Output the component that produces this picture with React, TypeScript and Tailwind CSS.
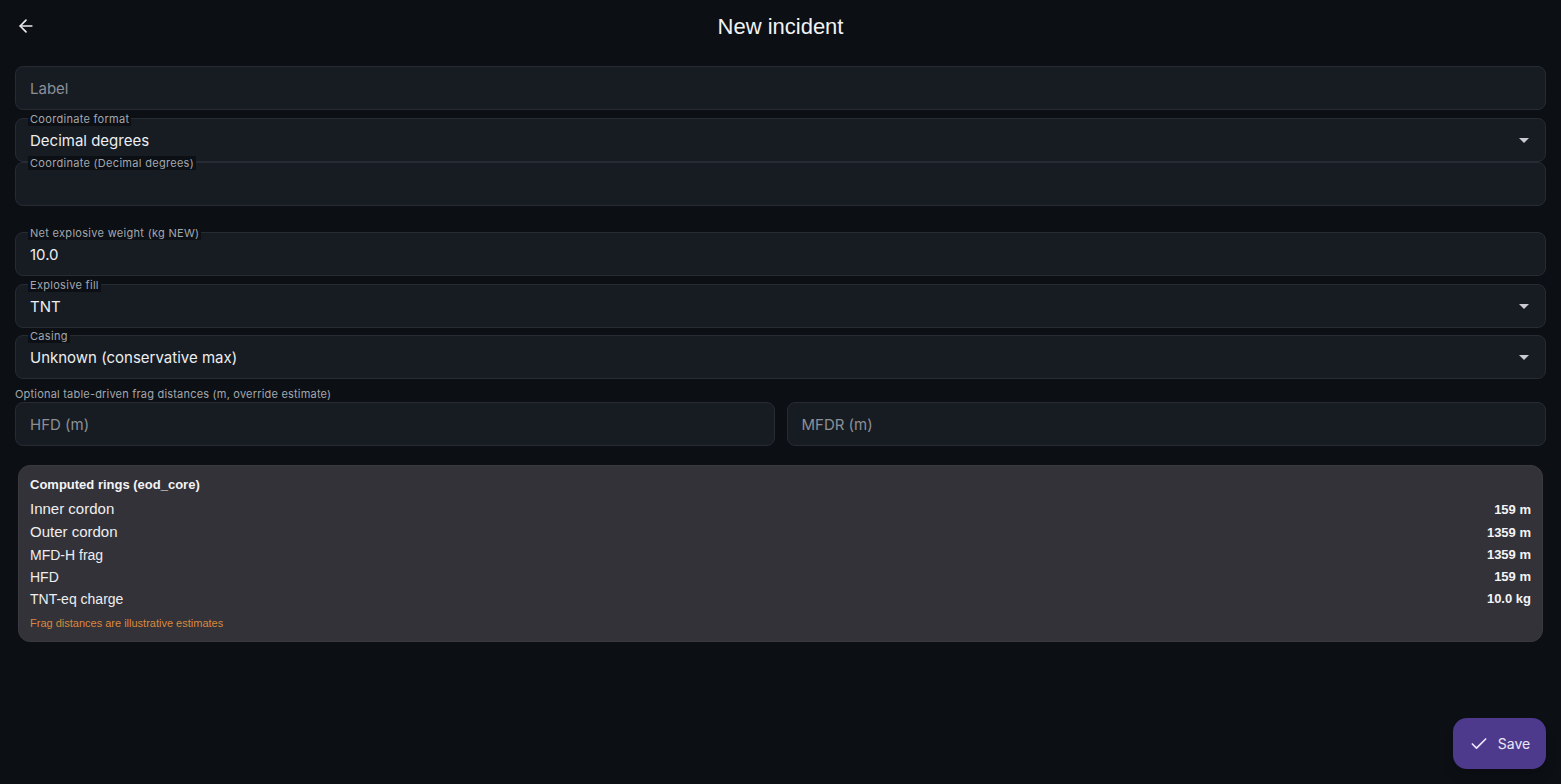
import { ArrowLeft, Check } from "lucide-react";

type Ring = { label: string; value: string; big?: boolean };

const rings: Ring[] = [
  { label: "Inner cordon", value: "159 m", big: true },
  { label: "Outer cordon", value: "1359 m", big: true },
  { label: "MFD-H frag", value: "1359 m" },
  { label: "HFD", value: "159 m" },
  { label: "TNT-eq charge", value: "10.0 kg" },
];

function Caret() {
  return (
    <svg width="10" height="5" viewBox="0 0 10 5" className="shrink-0">
      <path d="M0 0h10L5 5z" fill="#c9cbd0" />
    </svg>
  );
}

function Field({
  label,
  value,
  placeholder,
  select,
  className = "",
}: {
  label?: string;
  value?: string;
  placeholder?: string;
  select?: boolean;
  className?: string;
}) {
  return (
    <div
      className={`relative h-[44px] rounded-lg border border-[#262b34] bg-[#171b22] flex items-center pl-[14px] pr-[16px] ${className}`}
    >
      {label && (
        <span className="absolute left-[12px] top-[-7px] px-[2px] text-[11px] leading-[14px] tracking-[0.3px] text-[#a3a7ae] bg-[#0c0f14]">
          {label}
        </span>
      )}
      <span
        className={`flex-1 text-[15px] pt-[2px] ${
          value ? "text-[#eceef1]" : "text-[#8b9098]"
        }`}
      >
        {value ?? placeholder}
      </span>
      {select && <Caret />}
    </div>
  );
}

export default function App() {
  return (
    <div
      className="min-h-[784px] w-full bg-[#0c0f14] text-white relative"
      style={{ fontFamily: "Inter, 'Noto Sans', sans-serif" }}
    >
      <header className="h-[52px] flex items-center justify-center relative">
        <button className="absolute left-[16px] top-[16px] text-[#e8eaed]">
          <ArrowLeft size={20} strokeWidth={2} />
        </button>
        <h1
          className="text-[22px] text-[#f1f2f4]"
          style={{ fontFamily: "'Liberation Sans', Arial, sans-serif" }}
        >
          New incident
        </h1>
      </header>

      <main className="px-[15px] pt-[14px] flex flex-col">
        <Field placeholder="Label" />
        <Field
          className="mt-[8px]"
          label="Coordinate format"
          value="Decimal degrees"
          select
        />
        <Field label="Coordinate (Decimal degrees)" />

        <Field className="mt-[26px]" label="Net explosive weight (kg NEW)" value="10.0" />
        <Field className="mt-[8px]" label="Explosive fill" value="TNT" select />
        <Field className="mt-[7px]" label="Casing" value="Unknown (conservative max)" select />

        <p className="mt-[8px] text-[11px] leading-[14px] text-[#a3a7ae] tracking-[0.2px]">
          Optional table-driven frag distances (m, override estimate)
        </p>
        <div className="mt-[1px] grid grid-cols-2 gap-[12px]">
          <Field placeholder="HFD (m)" />
          <Field placeholder="MFDR (m)" />
        </div>

        <section
          className="mt-[19px] mx-[3px] rounded-xl bg-[#333238] border border-[#3a3940] px-[11px] pt-[10px] pb-[11px]"
          style={{ fontFamily: "'Liberation Sans', Arial, sans-serif" }}
        >
          <h2 className="text-[13px] font-bold leading-[18px] text-[#f4f4f6]">
            Computed rings (eod_core)
          </h2>
          <div className="mt-[4px] flex flex-col">
            {rings.map((r, i) => (
              <div
                key={r.label}
                className={`flex items-center justify-between ${i < 2 ? "h-[23px]" : "h-[22px]"}`}
              >
                <span
                  className={`text-[#eeeef0] ${r.big ? "text-[15px]" : "text-[14px]"}`}
                >
                  {r.label}
                </span>
                <span className="text-[13px] font-bold text-[#f4f4f6]">{r.value}</span>
              </div>
            ))}
          </div>
          <p className="mt-[6px] text-[11px] leading-[14px] text-[#d9893d]">
            Frag distances are illustrative estimates
          </p>
        </section>
      </main>

      <button className="absolute right-[15px] top-[718px] h-[51px] w-[93px] rounded-[14px] bg-[#4e3a8c] flex items-center justify-center gap-[9px] text-[#ece8f7] text-[14px] shadow-lg">
        <Check size={20} strokeWidth={2} />
        <span>Save</span>
      </button>
    </div>
  );
}
